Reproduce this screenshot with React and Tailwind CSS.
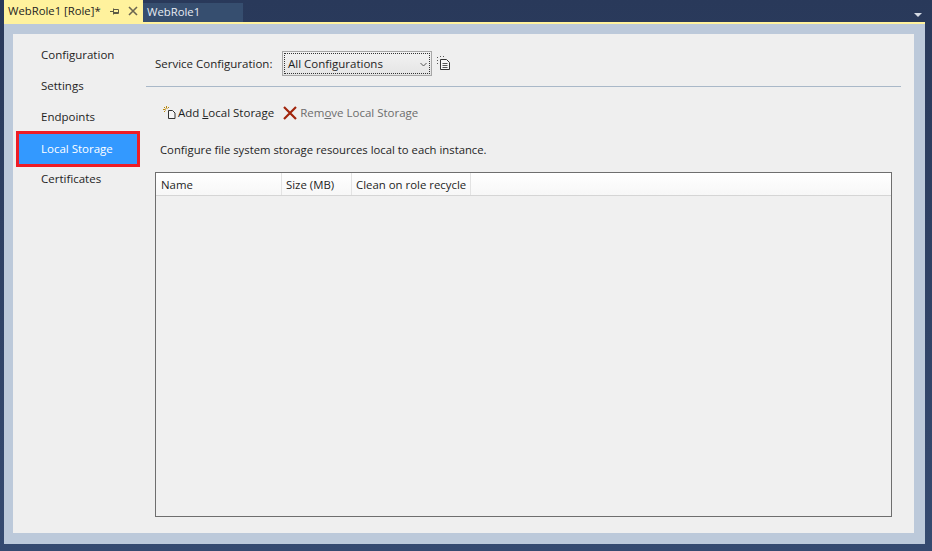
const NAV_ITEMS = ['Configuration', 'Settings', 'Endpoints'];

const PinIcon = () => (
  <svg width="9" height="9" viewBox="0 0 9 9">
    <path d="M0 4.500h3M3.500 1.500v6M3.500 2.500h5v4h-5M3.500 5.500h5" fill="none" stroke="#5c5a45" strokeWidth="1" />
  </svg>
);

const CloseIcon = () => (
  <svg width="10" height="10" viewBox="0 0 10 10">
    <path d="M1 1l8 8M9 1l-8 8" stroke="#6b6650" strokeWidth="1.6" />
  </svg>
);

const CopyConfigIcon = () => (
  <svg width="16" height="14" viewBox="0 0 16 14" fill="none">
    <path d="M1.500 1v1M1.500 4v1M1.500 7v1M4 .500h1M7 .500h1" stroke="#555" strokeWidth="1" />
    <path d="M4.500 3.500h6l3 3v7h-9z" fill="#f5f5f5" stroke="#333" strokeWidth="1" />
    <path d="M6.500 7.500h5M6.500 9.500h5M6.500 11.500h5" stroke="#555" strokeWidth="1" />
  </svg>
);

const AddIcon = () => (
  <svg width="14" height="14" viewBox="0 0 14 14" fill="none">
    <path d="M5.500 4.500h4l2.500 2.500v5.500h-6.500z" fill="#f5f5f5" stroke="#333" strokeWidth="1" />
    <path d="M3.500 0v2.500M0 3.500h2.500M1 1l1.500 1.500M6 1L4.500 2.500M1 6l1.500-1.500" stroke="#b8860b" strokeWidth="1" />
  </svg>
);

const RemoveIcon = () => (
  <svg width="14" height="14" viewBox="0 0 14 14">
    <path d="M1 1l12 12M13 1L1 13" stroke="#a1260d" strokeWidth="2.200" />
  </svg>
);

const App = () => {
  return (
    <div className="font-['Open_Sans',sans-serif] w-[932px] h-[551px] overflow-hidden bg-gradient-to-b from-[#29395a] to-[#354a70] pl-1 pr-[7px] text-[11.300px] text-[#1e1e1e]">
      {/* Tabs */}
      <div className="relative flex h-[22px]">
        <div className="flex h-[22px] w-[139px] items-center bg-[#fff29d] pl-1">
          <span className="w-[102px] whitespace-nowrap">WebRole1 [Role]*</span>
          <PinIcon />
          <span className="ml-[9px]"><CloseIcon /></span>
        </div>
        <div className="mt-[3px] flex h-[19px] w-[100px] items-center bg-[#364e6f] pl-[4px] text-[#e6ebf2]">WebRole1</div>
        <div className="absolute right-[3px] top-[13px] h-0 w-0 border-x-4 border-t-4 border-x-transparent border-t-[#d5dbe5]" />
      </div>

      {/* Editor panel */}
      <div className="h-[522px] border-t-2 border-t-[#fff29d] bg-[#bcc9da] pt-[10px] pl-[9px] pr-[11px]">
        <div className="flex h-[499px] bg-[#efefef]">
          {/* Left nav */}
          <div className="w-[133px] shrink-0 pt-1 text-[11.500px]">
            {NAV_ITEMS.map((label) => (
              <div key={label} className="flex h-[31px] items-center pl-[28px] pt-[2px]">{label}</div>
            ))}
            <div className="ml-[3px] flex h-[36px] w-[124px] items-center border-[3px] border-[#ee1c25] bg-[#3399ff] pl-[22px] text-white">Local Storage</div>
            <div className="flex h-[23px] items-center pl-[28px]">Certificates</div>
          </div>

          {/* Right content */}
          <div className="flex-1 pt-[17px]">
            <div className="flex h-[25px] items-center pl-[9px] text-[11.500px]">
              <span className="w-[127px] whitespace-nowrap pt-px">Service Configuration:</span>
              <div className="flex h-[25px] w-[150px] items-center justify-between border border-[#a6a6a6] bg-gradient-to-b from-[#f2f2f2] to-[#e5e5e5] p-px">
                <div className="flex h-full w-full items-center justify-between border border-dotted border-[#333] pl-[3px] pr-[2px] pt-px">
                  <span>All Configurations</span>
                  <svg width="7" height="5" viewBox="0 0 7 5" fill="none"><path d="M.5 1l3 3 3-3" stroke="#555" /></svg>
                </div>
              </div>
              <span className="ml-1 mb-[2px]"><CopyConfigIcon /></span>
            </div>

            <div className="mt-[10px] h-px w-[755px] bg-[#a9b8c8]" />

            <div className="mt-[17px] flex h-[18px] items-center pl-[17px] text-[11.500px]">
              <AddIcon />
              <span className="ml-px whitespace-nowrap">Add <span className="underline">L</span>ocal Storage</span>
              <span className="ml-[9px]"><RemoveIcon /></span>
              <span className="ml-[3px] whitespace-nowrap text-[#6d6d6d]">Rem<span className="underline">o</span>ve Local Storage</span>
            </div>

            <p className="mt-[19px] h-[18px] pl-[14px] leading-[18px]">Configure file system storage resources local to each instance.</p>

            {/* Table */}
            <div className="ml-[9px] mt-[13px] h-[345px] w-[737px] border border-[#6e6e6e] bg-[#f0f0f0]">
              <div className="flex h-[23px] whitespace-nowrap border-b border-[#d5d5d5] bg-gradient-to-b from-white to-[#f7f7f7] text-[11.400px]">
                <div className="flex w-[126px] items-center border-r border-[#e3e3e3] pl-[5px] pt-px">Name</div>
                <div className="flex w-[70px] items-center border-r border-[#e3e3e3] pl-[4px] pt-px">Size (MB)</div>
                <div className="flex w-[119px] items-center border-r border-[#e3e3e3] pl-[4px] pt-px">Clean on role recycle</div>
              </div>
            </div>
          </div>
        </div>
      </div>
    </div>
  );
};

export default App;
